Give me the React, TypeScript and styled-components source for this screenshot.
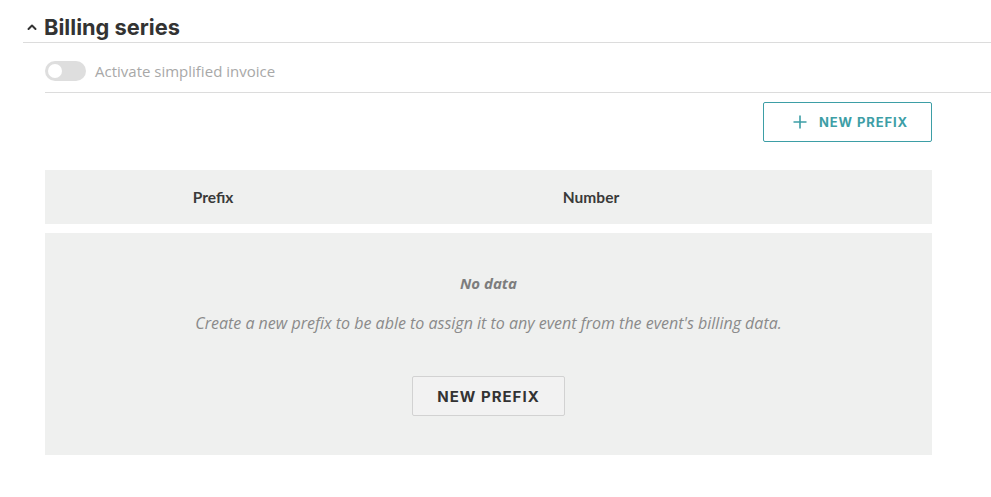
import React from "react";
import styled, { createGlobalStyle } from "styled-components";

const GlobalStyle = createGlobalStyle`
  html, body {
    margin: 0;
    padding: 0;
    background: #ffffff;
  }
  body {
    font-family: "Open Sans", "Noto Sans", sans-serif;
    color: #333333;
  }
  * { box-sizing: border-box; }
`;

const Page = styled.div`
  width: 991px;
  height: 497px;
  padding: 12px 0 0 23px;
`;

const SectionHeader = styled.div`
  display: flex;
  align-items: center;
  gap: 7px;
  height: 31px;
  padding-left: 4px;
  border-bottom: 1px solid #dcdcdc;
`;

const Title = styled.h2`
  margin: 0;
  font-family: "Inter", "Liberation Sans", sans-serif;
  font-size: 21.8px;
  font-weight: 700;
  color: #333333;
`;

const Body = styled.div`
  padding-left: 22px;
`;

const ToggleRow = styled.div`
  display: flex;
  align-items: center;
  gap: 9px;
  height: 50px;
  padding-top: 7px;
  border-bottom: 1px solid #dcdcdc;
`;

const Switch = styled.div`
  position: relative;
  width: 41px;
  height: 20px;
  border-radius: 10px;
  background: #dedede;
  &::after {
    content: "";
    position: absolute;
    left: 3px;
    top: 3px;
    width: 14px;
    height: 14px;
    border-radius: 50%;
    background: #ffffff;
  }
`;

const ToggleLabel = styled.span`
  font-size: 15px;
  color: #a8a8a8;
`;

const Toolbar = styled.div`
  display: flex;
  justify-content: flex-end;
  width: 887px;
  padding-top: 9px;
  height: 77px;
`;

const OutlineButton = styled.button`
  display: flex;
  align-items: center;
  justify-content: center;
  gap: 12px;
  width: 169px;
  height: 40px;
  border: 1px solid #3d9ea6;
  border-radius: 2px;
  background: #ffffff;
  color: #3d9ea6;
  font-family: "Inter", "Liberation Sans", sans-serif;
  font-size: 13px;
  font-weight: 700;
  letter-spacing: 0.9px;
  padding: 0 0 0 6px;
`;

const Table = styled.div`
  width: 887px;
  display: flex;
  flex-direction: column;
  gap: 9px;
`;

const HeaderRow = styled.div`
  display: grid;
  grid-template-columns: 336px 420px 1fr;
  align-items: center;
  height: 54px;
  background: #eff0ef;
`;

const HeaderCell = styled.div`
  text-align: center;
  font-family: "Lato", sans-serif;
  font-size: 15.5px;
  font-weight: 700;
  color: #3a3a3a;
`;

const EmptyState = styled.div`
  display: flex;
  flex-direction: column;
  align-items: center;
  height: 222px;
  padding-top: 40px;
  background: #eff0ef;
`;

const EmptyTitle = styled.div`
  font-style: italic;
  font-weight: 700;
  font-size: 15px;
  color: #7d7d7d;
`;

const EmptyText = styled.div`
  margin-top: 19px;
  font-style: italic;
  font-size: 16px;
  color: #8a8a8a;
`;

const PlainButton = styled.button`
  margin-top: 42px;
  width: 153px;
  height: 40px;
  border: 1px solid #d2d2d2;
  border-radius: 2px;
  background: #f2f2f2;
  color: #333333;
  font-family: "Inter", "Liberation Sans", sans-serif;
  font-size: 15px;
  font-weight: 700;
  letter-spacing: 1px;
`;

const Chevron = () => (
  <svg width="10" height="8" viewBox="0 0 10 8">
    <path d="M1.5 6 L5 2.5 L8.5 6" fill="none" stroke="#333" strokeWidth="2" strokeLinecap="round" strokeLinejoin="round" />
  </svg>
);

const Plus = () => (
  <svg width="14" height="14" viewBox="0 0 14 14">
    <path d="M7 0.5 V13.5 M0.5 7 H13.5" stroke="#3d9ea6" strokeWidth="1.6" />
  </svg>
);

export default function App() {
  return (
    <>
      <GlobalStyle />
      <Page>
        <SectionHeader>
          <Chevron />
          <Title>Billing series</Title>
        </SectionHeader>
        <Body>
          <ToggleRow>
            <Switch />
            <ToggleLabel>Activate simplified invoice</ToggleLabel>
          </ToggleRow>
          <Toolbar>
            <OutlineButton>
              <Plus />
              NEW PREFIX
            </OutlineButton>
          </Toolbar>
          <Table>
            <HeaderRow>
              <HeaderCell>Prefix</HeaderCell>
              <HeaderCell>Number</HeaderCell>
              <HeaderCell />
            </HeaderRow>
            <EmptyState>
              <EmptyTitle>No data</EmptyTitle>
              <EmptyText>
                Create a new prefix to be able to assign it to any event from the event's billing data.
              </EmptyText>
              <PlainButton>NEW PREFIX</PlainButton>
            </EmptyState>
          </Table>
        </Body>
      </Page>
    </>
  );
}
